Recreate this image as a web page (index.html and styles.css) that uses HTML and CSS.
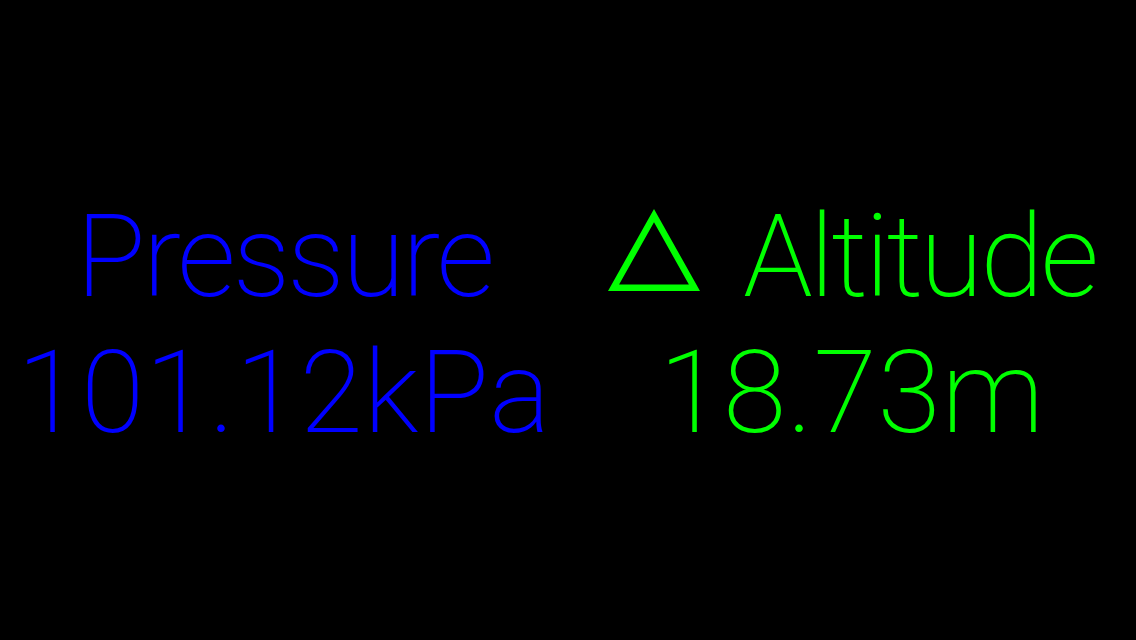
FILE: index.html
```html
<!DOCTYPE html>
<html lang="en">
<head>
<meta charset="utf-8">
<title>Pressure and Altitude</title>
<link rel="stylesheet" href="styles.css">
</head>
<body>
<main class="readout">
  <section class="col pressure">
    <div class="label">Pressure</div>
    <div class="value">101.12kPa</div>
  </section>
  <section class="col altitude">
    <div class="label"><svg class="delta" viewBox="0 0 92 82" width="92" height="82" aria-hidden="true"><path fill="currentColor" fill-rule="evenodd" d="M0 82 L46 0 L92 82 Z M11.1 75.5 L80.9 75.5 L46 13.3 Z"/></svg><span class="label-text">Altitude</span></div>
    <div class="value">18.73m</div>
  </section>
</main>
</body>
</html>
```
FILE: styles.css
```css
html, body {
  margin: 0;
  height: 100%;
  background: #000;
}
body {
  font-family: Roboto, "Helvetica Neue", "Liberation Sans", sans-serif;
  font-weight: 200;
}
.readout {
  display: grid;
  grid-template-columns: 1fr 1fr;
  padding-top: 189px;
}
.col {
  text-align: center;
  font-size: 115px;
  line-height: 136px;
  white-space: nowrap;
}
.pressure { color: #0000ff; }
.altitude { color: #00ff00; }
.label { letter-spacing: -3px; }
.value { letter-spacing: 0.7px; }
.delta {
  vertical-align: 5px;
  margin-right: 43px;
}
```
